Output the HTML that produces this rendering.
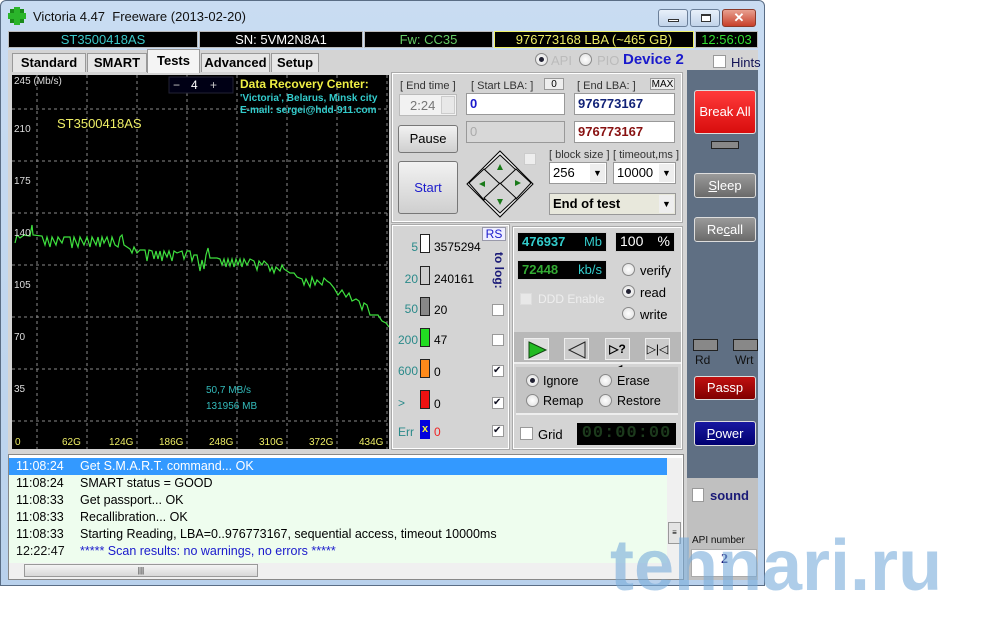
<!DOCTYPE html>
<html><head><meta charset="utf-8"><style>
*{margin:0;padding:0;box-sizing:border-box}
body{width:1008px;height:630px;background:#fff;position:relative;overflow:hidden;font-family:"Liberation Sans",sans-serif;font-size:12px}
.a{position:absolute}
.win{left:0;top:0;width:765px;height:586px;background:linear-gradient(#c9dcf2,#b9d1ec);border:1px solid #5a6d85;border-radius:6px 6px 0 0}
.ib{background:#000;border:1px solid #bbb;height:17px;top:31px;text-align:center;font-size:13px;line-height:15px}
.tab{top:53px;height:19px;background:#e6e6e6;border:1px solid #999;border-bottom:none;font-weight:bold;font-size:13px;text-align:center;line-height:18px}
.btn{background:linear-gradient(#f2f2f2,#cfcfcf);border:1px solid #777;border-radius:3px;text-align:center;font-size:13px}
.inp{background:#fff;border:1px solid #999;font-weight:bold;font-size:13px;padding-left:3px;line-height:19px}
.lbl{font-size:11px;color:#333}
.cb{width:12px;height:12px;background:#fff;border:1px solid #999}
.rad{width:13px;height:13px;border-radius:50%;background:radial-gradient(#fff,#ddd);border:1px solid #888}
.rad.on::after{content:"";position:absolute;left:3px;top:3px;width:5px;height:5px;border-radius:50%;background:#223}
.sb{border-radius:3px;border:1px solid #ddd;color:#fff;text-align:center;font-size:13px}
.log div{height:17px;line-height:17px;padding-left:7px;font-family:"Liberation Sans Narrow","Liberation Sans",sans-serif;font-size:12.5px}
.log span{display:inline-block;width:64px}
</style></head><body>
<div class="a win"></div>
<!-- title -->
<div class="a" style="left:10px;top:9px;width:14px;height:14px;background:#1a8a1a"></div>
<div class="a" style="left:14px;top:7px;width:6px;height:18px;background:#2bb52b"></div>
<div class="a" style="left:8px;top:13px;width:18px;height:6px;background:#2bb52b"></div>
<div class="a" style="left:33px;top:9px;font-size:13px;color:#111">Victoria 4.47&nbsp; Freeware (2013-02-20)</div>
<div class="a" style="left:658px;top:9px;width:30px;height:18px;border:1px solid #6b7f99;border-radius:3px;background:linear-gradient(#e8f0fa,#c1d3ea)"><div class="a" style="left:9px;top:9px;width:11px;height:3px;border:1px solid #333;background:#fff"></div></div>
<div class="a" style="left:690px;top:9px;width:30px;height:18px;border:1px solid #6b7f99;border-radius:3px;background:linear-gradient(#e8f0fa,#c1d3ea)"><div class="a" style="left:10px;top:4px;width:10px;height:8px;border:1px solid #333;border-top-width:2px;background:#fff"></div></div>
<div class="a" style="left:722px;top:9px;width:34px;height:18px;border:1px solid #8a3a2a;border-radius:3px;background:linear-gradient(#e8a090,#c8402a);color:#fff;font-weight:bold;text-align:center;font-size:13px;line-height:16px">✕</div>
<!-- info bar -->
<div class="a ib" style="left:8px;width:190px;color:#3cc8c8">ST3500418AS</div>
<div class="a ib" style="left:199px;width:164px;color:#fff">SN: 5VM2N8A1</div>
<div class="a ib" style="left:364px;width:129px;color:#6c6">Fw: CC35</div>
<div class="a ib" style="left:494px;width:200px;color:#ee6;border-color:#ee6">976773168 LBA (~465 GB)</div>
<div class="a ib" style="left:695px;width:63px;color:#3d3">12:56:03</div>
<!-- main gray -->
<div class="a" style="left:8px;top:50px;width:750px;height:530px;background:#d4d4d4"></div>
<div class="a tab" style="left:12px;width:74px">Standard</div>
<div class="a tab" style="left:87px;width:60px">SMART</div>
<div class="a tab" style="left:147px;top:49px;height:24px;width:53px;background:#f4f4f4;line-height:22px">Tests</div>
<div class="a tab" style="left:201px;width:69px">Advanced</div>
<div class="a tab" style="left:271px;width:48px">Setup</div>
<div class="a rad on" style="left:535px;top:53px"></div><div class="a" style="left:551px;top:53px;color:#bbb;font-size:13px">API</div>
<div class="a rad" style="left:579px;top:53px"></div><div class="a" style="left:597px;top:53px;color:#bbb;font-size:13px">PIO</div>
<div class="a" style="left:623px;top:51px;color:#1a1acc;font-weight:bold;font-size:15px">Device 2</div>
<div class="a cb" style="left:713px;top:55px;width:13px;height:13px"></div>
<div class="a" style="left:731px;top:55px;color:#115;font-size:13px">Hints</div>
<!-- graph -->
<svg class="a" style="left:12px;top:75px" width="377" height="374" viewBox="0 0 377 374">
<rect width="377" height="374" fill="#000"/>
<g stroke="#8a8a8a" stroke-dasharray="3,3" stroke-width="1">
<line x1="25" y1="0" x2="25" y2="374"/><line x1="75" y1="0" x2="75" y2="374"/><line x1="125" y1="0" x2="125" y2="374"/><line x1="175" y1="0" x2="175" y2="374"/><line x1="225" y1="0" x2="225" y2="374"/><line x1="275" y1="0" x2="275" y2="374"/><line x1="325" y1="0" x2="325" y2="374"/><line x1="375" y1="0" x2="375" y2="374"/>
<line x1="0" y1="34" x2="377" y2="34"/><line x1="0" y1="86" x2="377" y2="86"/><line x1="0" y1="138" x2="377" y2="138"/><line x1="0" y1="190" x2="377" y2="190"/><line x1="0" y1="242" x2="377" y2="242"/><line x1="0" y1="294" x2="377" y2="294"/><line x1="0" y1="346" x2="377" y2="346"/>
</g>
<polyline fill="none" stroke="#3ee03e" stroke-width="1.2" points="3,168 5,160 8,163 12,160 18,161 20,150 21,160 30,161 33,170 35,162 38,172 40,162 44,170 46,162 50,168 52,162 58,162 60,173 62,162 66,172 68,162 72,170 75,162 78,172 80,162 84,170 86,162 88,172 90,162 92,168 95,162 98,172 100,162 103,170 106,172 108,162 110,160 112,170 115,172 118,174 120,178 122,172 125,178 128,175 133,175 135,186 137,175 140,176 142,184 144,176 146,184 148,176 150,186 152,176 155,182 157,176 160,186 162,176 165,178 170,176 172,184 175,176 178,176 180,186 182,180 185,180 188,196 190,185 192,194 194,180 196,173 198,183 205,183 208,184 210,190 212,184 214,192 216,184 218,191 220,184 222,192 224,184 226,190 228,184 230,192 232,184 235,190 238,184 242,186 245,195 247,186 250,190 252,186 256,190 258,196 260,192 262,198 264,192 268,196 270,190 272,194 275,196 278,198 282,198 285,202 290,204 292,210 294,204 298,212 300,202 303,210 305,205 310,210 312,203 315,206 318,208 322,213 326,220 330,215 334,222 337,218 340,226 344,224 347,226 350,235 352,228 355,230 358,240 362,240 366,240 370,246 374,248 377,252"/>
<g font-family="Liberation Sans" font-size="10" fill="#ddd">
<text x="2" y="9">245 (Mb/s)</text><text x="2" y="57">210</text><text x="2" y="109">175</text><text x="2" y="161">140</text><text x="2" y="213">105</text><text x="2" y="265">70</text><text x="2" y="317">35</text></g>
<g font-family="Liberation Sans" font-size="10" fill="#ee6"><text x="3" y="370">0</text><text x="50" y="370">62G</text><text x="97" y="370">124G</text><text x="147" y="370">186G</text><text x="197" y="370">248G</text><text x="247" y="370">310G</text><text x="297" y="370">372G</text><text x="347" y="370">434G</text></g>
<text x="45" y="53" font-family="Liberation Sans" font-size="13" fill="#ee6">ST3500418AS</text>
<rect x="157" y="2" width="64" height="16" fill="#000015" stroke="#223" />
<text x="161" y="14" font-family="Liberation Sans" font-size="12" fill="#ccc">−</text><text x="179" y="14" font-family="Liberation Sans" font-size="12" fill="#fff">4</text><text x="198" y="14" font-family="Liberation Sans" font-size="12" fill="#ccc">+</text>
<text x="228" y="13" font-family="Liberation Sans" font-size="12" font-weight="bold" fill="#ee4">Data Recovery Center:</text>
<text x="228" y="26" font-family="Liberation Sans" font-size="10" font-weight="bold" fill="#3cc">'Victoria', Belarus, Minsk city</text>
<text x="228" y="38" font-family="Liberation Sans" font-size="10" font-weight="bold" fill="#3cc">E-mail: sergei@hdd-911.com</text>
<text x="194" y="318" font-family="Liberation Sans" font-size="10" fill="#3bb">50,7 MB/s</text>
<text x="194" y="334" font-family="Liberation Sans" font-size="10" fill="#3bb">131956 MB</text>
</svg>
<!-- top control panel -->
<div class="a" style="left:392px;top:73px;width:290px;height:149px;border:1px solid #fff;outline:1px solid #aaa"></div>
<div class="a lbl" style="left:400px;top:80px">[ End time ]</div>
<div class="a lbl" style="left:471px;top:80px">[ Start LBA: ]</div>
<div class="a" style="left:544px;top:78px;width:20px;height:12px;background:#eee;border:1px solid #999;font-size:10px;text-align:center;line-height:11px">0</div>
<div class="a lbl" style="left:577px;top:80px">[ End LBA: ]</div>
<div class="a" style="left:650px;top:78px;width:25px;height:12px;background:#eee;border:1px solid #999;font-size:10px;text-align:center;line-height:11px">MAX</div>
<div class="a" style="left:399px;top:94px;width:58px;height:22px;background:#f2f2f2;border:1px solid #bbb;color:#777;font-size:13px;padding:3px 0 0 10px">2:24</div>
<div class="a" style="left:441px;top:96px;width:14px;height:18px;border:1px solid #ccc;background:#e8e8e8"></div>
<div class="a inp" style="left:466px;top:93px;width:99px;height:22px;color:#1a1acc">0</div>
<div class="a inp" style="left:574px;top:93px;width:101px;height:22px;color:#112277">976773167</div>
<div class="a inp" style="left:466px;top:121px;width:99px;height:22px;background:#d8d8d8;color:#aaa;font-weight:normal">0</div>
<div class="a inp" style="left:574px;top:121px;width:101px;height:22px;color:#881111">976773167</div>
<div class="a btn" style="left:398px;top:125px;width:60px;height:28px;line-height:26px">Pause</div>
<div class="a btn" style="left:398px;top:161px;width:60px;height:53px;line-height:51px;color:#1a1acc">Start</div>
<svg class="a" style="left:466px;top:150px" width="68" height="68"><g stroke="#000" fill="#d4d4d4"><polygon points="34,1 67,34 34,67 1,34" fill="#eee"/><polygon points="34,5 50,20 34,35 18,20"/><polygon points="18,20 34,35 18,51 3,34" transform="translate(0,-1)"/><polygon points="50,20 65,34 50,50 34,35" transform="translate(0,-1)"/><polygon points="34,35 50,50 34,65 18,50" transform="translate(0,-2)"/></g><g fill="#197a19"><polygon points="34,14 31,20 37,20"/><polygon points="13,34 19,31 19,37"/><polygon points="55,33 49,30 49,36"/><polygon points="34,55 31,49 37,49"/></g></svg>
<div class="a cb" style="left:524px;top:153px;border-color:#ccc;background:#eee"></div>
<div class="a lbl" style="left:549px;top:149px">[ block size ]</div>
<div class="a lbl" style="left:613px;top:149px">[ timeout,ms ]</div>
<div class="a inp" style="left:549px;top:162px;width:58px;height:22px;font-weight:normal">256<div class="a" style="right:1px;top:1px;width:15px;height:18px;background:#eee;font-size:9px;text-align:center">▼</div></div>
<div class="a inp" style="left:613px;top:162px;width:63px;height:22px;font-weight:normal">10000<div class="a" style="right:1px;top:1px;width:15px;height:18px;background:#eee;font-size:9px;text-align:center">▼</div></div>
<div class="a inp" style="left:549px;top:193px;width:127px;height:22px;background:#e8e8dc">End of test<div class="a" style="right:1px;top:1px;width:15px;height:18px;background:#eee;font-size:9px;text-align:center;font-weight:normal">▼</div></div>
<!-- stats panel -->
<div class="a" style="left:392px;top:225px;width:117px;height:224px;border:1px solid #fff;outline:1px solid #aaa"></div>
<div class="a" style="left:482px;top:227px;width:24px;height:14px;background:#eef;border:1px solid #99a;color:#1a1acc;font-size:12px;text-align:center;line-height:12px">RS</div>
<div class="a" style="top:252px;transform:rotate(90deg);transform-origin:0 0;left:506px;color:#1a1a77;font-weight:bold;font-size:12px;white-space:nowrap">to log:</div>
<div class="a" style="left:398px;top:240px;width:20px;text-align:right;color:#2a8a8a;font-size:12px">5</div>
<div class="a" style="left:420px;top:234px;width:10px;height:19px;background:#fff;border:1px solid #222"></div><div class="a" style="left:434px;top:240px;font-size:12px">3575294</div>
<div class="a" style="left:398px;top:272px;width:20px;text-align:right;color:#2a8a8a;font-size:12px">20</div>
<div class="a" style="left:420px;top:266px;width:10px;height:19px;background:#ccc;border:1px solid #222"></div><div class="a" style="left:434px;top:272px;font-size:12px">240161</div>
<div class="a" style="left:398px;top:302px;width:20px;text-align:right;color:#2a8a8a;font-size:12px">50</div>
<div class="a" style="left:420px;top:297px;width:10px;height:19px;background:#888;border:1px solid #222"></div><div class="a" style="left:434px;top:303px;font-size:12px">20</div>
<div class="a" style="left:394px;top:333px;width:24px;text-align:right;color:#2a8a8a;font-size:12px">200</div>
<div class="a" style="left:420px;top:328px;width:10px;height:19px;background:#22dd22;border:1px solid #222"></div><div class="a" style="left:434px;top:333px;font-size:12px">47</div>
<div class="a" style="left:394px;top:364px;width:24px;text-align:right;color:#2a8a8a;font-size:12px">600</div>
<div class="a" style="left:420px;top:359px;width:10px;height:19px;background:#ff8a1a;border:1px solid #222"></div><div class="a" style="left:434px;top:365px;font-size:12px">0</div>
<div class="a" style="left:398px;top:396px;width:15px;color:#2a8a8a;font-size:12px">&gt;</div>
<div class="a" style="left:420px;top:390px;width:10px;height:19px;background:#ee1111;border:1px solid #222"></div><div class="a" style="left:434px;top:397px;font-size:12px">0</div>
<div class="a" style="left:398px;top:425px;color:#2a8a8a;font-size:12px">Err</div>
<div class="a" style="left:420px;top:420px;width:10px;height:19px;background:#0000dd;color:#ee4;font-size:11px;font-weight:bold;text-align:center;line-height:19px">x</div><div class="a" style="left:434px;top:425px;font-size:12px;color:#e22">0</div>
<div class="a cb" style="left:492px;top:304px"></div><div class="a cb" style="left:492px;top:334px"></div>
<div class="a cb" style="left:492px;top:365px;font-size:10px;line-height:10px;color:#112">✔</div>
<div class="a cb" style="left:492px;top:397px;font-size:10px;line-height:10px;color:#112">✔</div>
<div class="a cb" style="left:492px;top:425px;font-size:10px;line-height:10px;color:#112">✔</div>
<!-- right mid panel -->
<div class="a" style="left:513px;top:227px;width:169px;height:222px;border:1px solid #fff;outline:1px solid #aaa"></div>
<div class="a" style="left:517px;top:232px;width:90px;height:20px;background:#000;border:1px solid #ccc;color:#3cc;font-weight:bold;font-size:13px;padding:1px 4px">476937<span style="float:right;font-weight:normal">Mb</span></div>
<div class="a" style="left:615px;top:232px;width:60px;height:20px;background:#000;border:1px solid #ccc;color:#fff;font-size:14px;padding:0 4px">100<span style="float:right">%</span></div>
<div class="a" style="left:517px;top:260px;width:90px;height:20px;background:#000;border:1px solid #ccc;color:#3a3;font-weight:bold;font-size:13px;padding:1px 4px">72448<span style="float:right;font-weight:normal;color:#3cc">kb/s</span></div>
<div class="a rad" style="left:622px;top:263px"></div><div class="a" style="left:640px;top:263px;font-size:13px">verify</div>
<div class="a rad on" style="left:622px;top:285px"></div><div class="a" style="left:640px;top:285px;font-size:13px">read</div>
<div class="a rad" style="left:622px;top:307px"></div><div class="a" style="left:640px;top:307px;font-size:13px">write</div>
<div class="a cb" style="left:520px;top:293px;border-color:#ddd;background:#e8e8e8"></div><div class="a" style="left:538px;top:292px;color:#eee;font-size:12px">DDD Enable</div>
<div class="a" style="left:514px;top:332px;width:167px;height:32px;background:#b8b8b8;border-bottom:2px solid #eee"></div>
<div class="a" style="left:524px;top:338px;width:25px;height:22px;background:#ddd;border:1px solid #eee"><svg width="25" height="22"><polygon points="4,3 21,11 4,19" fill="#22bb22" stroke="#114411"/></svg></div>
<div class="a" style="left:564px;top:338px;width:25px;height:22px;background:#ccc;border:1px solid #eee"><svg width="25" height="22"><polygon points="20,3 4,11 20,19" fill="#ccc" stroke="#222"/></svg></div>
<div class="a" style="left:605px;top:338px;width:25px;height:22px;background:#ccc;border:1px solid #eee;font-size:12px;font-weight:bold;text-align:center;line-height:20px">▷?◁</div>
<div class="a" style="left:645px;top:338px;width:25px;height:22px;background:#ccc;border:1px solid #eee;font-size:12px;text-align:center;line-height:20px">▷|◁</div>
<div class="a" style="left:516px;top:367px;width:162px;height:48px;background:#c4c4c4;border-bottom:2px solid #eee"></div>
<div class="a rad on" style="left:526px;top:374px"></div><div class="a" style="left:543px;top:374px;font-size:12.5px">Ignore</div>
<div class="a rad" style="left:599px;top:374px"></div><div class="a" style="left:617px;top:374px;font-size:12.5px">Erase</div>
<div class="a rad" style="left:526px;top:394px"></div><div class="a" style="left:543px;top:394px;font-size:12.5px">Remap</div>
<div class="a rad" style="left:599px;top:394px"></div><div class="a" style="left:617px;top:394px;font-size:12.5px">Restore</div>
<div class="a cb" style="left:520px;top:427px;width:13px;height:13px"></div><div class="a" style="left:538px;top:427px;font-size:13px">Grid</div>
<div class="a" style="left:577px;top:423px;width:99px;height:22px;background:#000;color:#1c3a1c;font-family:'Liberation Mono',monospace;font-size:17px;font-weight:bold;text-align:center;line-height:22px;letter-spacing:1px">00:00:00</div>
<!-- right slate panel -->
<div class="a" style="left:687px;top:70px;width:71px;height:408px;background:#5f6f83"></div>
<div class="a sb" style="left:694px;top:90px;width:62px;height:44px;background:linear-gradient(#ff3a3a,#d80d0d);line-height:42px">Break All</div>
<div class="a" style="left:711px;top:141px;width:28px;height:8px;background:#888;border:1px solid #222"></div>
<div class="a sb" style="left:694px;top:173px;width:62px;height:25px;background:linear-gradient(#9a9a9a,#6a6a6a);line-height:23px"><u>S</u>leep</div>
<div class="a sb" style="left:694px;top:217px;width:62px;height:25px;background:linear-gradient(#9a9a9a,#6a6a6a);line-height:23px">Re<u>c</u>all</div>
<div class="a" style="left:693px;top:339px;width:25px;height:12px;background:#888;border:1px solid #222"></div>
<div class="a" style="left:733px;top:339px;width:25px;height:12px;background:#888;border:1px solid #222"></div>
<div class="a" style="left:695px;top:353px;font-size:12px;color:#111">Rd</div><div class="a" style="left:735px;top:353px;font-size:12px;color:#111">Wrt</div>
<div class="a sb" style="left:694px;top:376px;width:62px;height:24px;background:linear-gradient(#c01010,#800000);line-height:22px">Passp</div>
<div class="a sb" style="left:694px;top:421px;width:62px;height:25px;background:linear-gradient(#1818a0,#000070);line-height:23px"><u>P</u>ower</div>
<div class="a" style="left:687px;top:478px;width:71px;height:102px;background:#c0c0c0"></div>
<div class="a cb" style="left:692px;top:488px;width:12px;height:14px"></div>
<div class="a" style="left:710px;top:488px;color:#1a1a77;font-weight:bold;font-size:13px">sound</div>
<div class="a" style="left:692px;top:535px;font-size:10px;color:#111">API number</div>
<div class="a" style="left:691px;top:549px;width:66px;height:28px;background:#fff;border:1px solid #aaa"></div>
<div class="a" style="left:721px;top:552px;font-weight:bold;font-size:14px;color:#1a1a77;font-family:'Liberation Serif',serif">2</div>
<!-- log -->
<div class="a" style="left:8px;top:454px;width:676px;height:126px;background:#fff;border:1px solid #888"></div>
<div class="a log" style="left:9px;top:458px;width:658px;height:105px;background:#eefdee">
<div style="background:#3399ff;color:#fff"><span>11:08:24</span>Get S.M.A.R.T. command... OK</div>
<div><span>11:08:24</span>SMART status = GOOD</div>
<div><span>11:08:33</span>Get passport... OK</div>
<div><span>11:08:33</span>Recallibration... OK</div>
<div><span>11:08:33</span>Starting Reading, LBA=0..976773167, sequential access, timeout 10000ms</div>
<div style="color:#1a1acc"><span style="color:#111">12:22:47</span>***** Scan results: no warnings, no errors *****</div>
</div>
<div class="a" style="left:667px;top:458px;width:15px;height:105px;background:#f0f0f0"></div>
<div class="a" style="left:668px;top:522px;width:13px;height:22px;background:#e4e4e4;border:1px solid #999;font-size:8px;text-align:center;line-height:20px">≡</div>
<div class="a" style="left:9px;top:563px;width:673px;height:16px;background:#f0f0f0"></div>
<div class="a" style="left:24px;top:564px;width:234px;height:13px;background:linear-gradient(#f4f4f4,#d8d8d8);border:1px solid #999;font-size:8px;text-align:center;line-height:11px">|||</div>
<!-- watermark -->
<div class="a" style="left:610px;top:528px;font-size:72px;font-weight:bold;letter-spacing:0px;color:rgba(120,172,218,0.6);line-height:76px">tehnari.ru</div>
</body></html>
